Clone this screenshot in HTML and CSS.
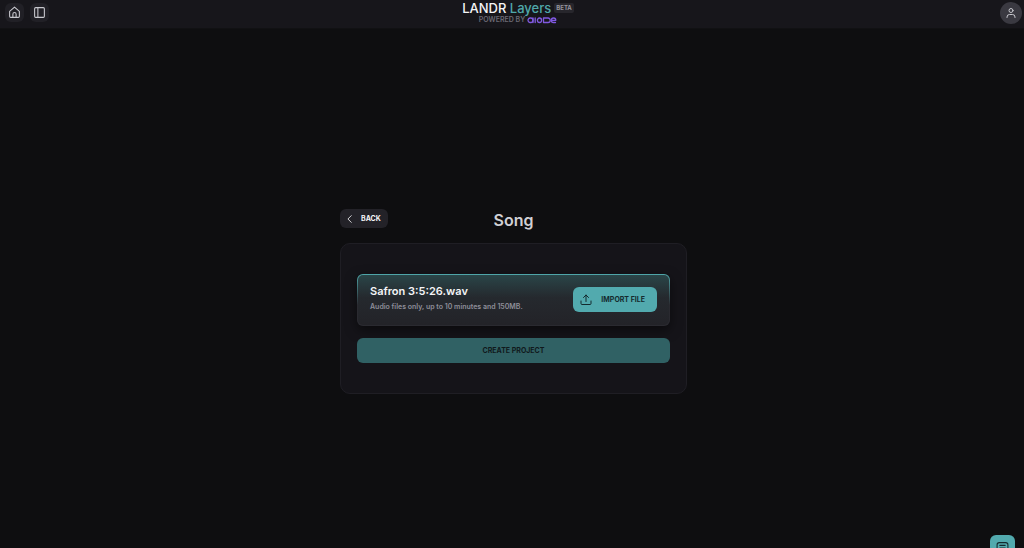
FILE: index.html
```html
<!DOCTYPE html>
<html lang="en">
    <head>
        <meta charset="utf-8">
        <meta name="viewport" content="width=device-width, initial-scale=1">
        <title>LANDR Layers</title>
        <link rel="stylesheet" href="styles.css">
    </head>
    <body>
        <header class="topbar">
            <nav class="topbar-nav">
                <a class="icon-btn" href="#" aria-label="Home">
                    <svg viewBox="0 0 24 24"><path d="M3 10 12 2l9 8v9a2 2 0 0 1-2 2H5a2 2 0 0 1-2-2z"/><path d="M9 21v-6a3 3 0 0 1 6 0v6"/></svg>
                </a>
                <button class="icon-btn" type="button" aria-label="Toggle sidebar">
                    <svg viewBox="0 0 24 24"><rect x="3" y="3" width="18" height="18" rx="2"/><path d="M9 3v18"/></svg>
                </button>
            </nav>
            <div class="brand">
                <div class="brand-name">LANDR <span class="brand-accent">Layers</span><span class="badge">BETA</span></div>
                <div class="powered">POWERED BY
                    <svg class="aiode" viewBox="0 0 30 7" role="img" aria-label="aiode">
                        <rect x="1" y="1" width="5" height="4.5" rx="2.2"/>
                        <path d="M6 1v4.5M8.2 1v4.5"/>
                        <rect x="10.4" y="1" width="4.2" height="4.5" rx="2.2"/>
                        <path d="M16.5 1h4.5a2.25 2.25 0 0 1 0 4.5h-4.5z"/>
                        <path d="M28.5 5.5h-2a2.25 2.25 0 1 1 2.300-2.200h-4"/>
                    </svg>
                </div>
            </div>
            <button class="avatar" type="button" aria-label="Account">
                <svg viewBox="0 0 24 24"><circle cx="12" cy="7" r="4"/><path d="M4 21v-1a5 5 0 0 1 5-5h6a5 5 0 0 1 5 5v1"/></svg>
            </button>
        </header>

        <main class="page">
            <section class="upload">
                <div class="upload-head">
                    <button class="back" type="button">
                        <svg viewBox="0 0 24 24"><path d="m15 4-8 8 8 8"/></svg>
                        BACK
                    </button>
                    <h1>Song</h1>
                </div>
                <div class="card">
                    <div class="file">
                        <div class="file-info">
                            <h2>Safron 3:5:26.wav</h2>
                            <p>Audio files only, up to 10 minutes and 150MB.</p>
                        </div>
                        <button class="import" type="button">
                            <svg viewBox="0 0 24 24"><path d="M12 16V3M7 8l5-5 5 5M2 15v5a2 2 0 0 0 2 2h16a2 2 0 0 0 2-2v-5"/></svg>
                            IMPORT FILE
                        </button>
                    </div>
                    <button class="create" type="button" disabled>CREATE PROJECT</button>
                </div>
            </section>
        </main>

        <button class="chat" type="button" aria-label="Open chat">
            <svg viewBox="0 0 24 24"><rect x="2" y="3" width="20" height="16" rx="4"/><path d="M7 8h10M7 13h10"/></svg>
        </button>
    </body>
</html>
```

FILE: styles.css
```css
* {
    box-sizing: border-box;
}

body {
    margin: 0;
    min-height: 100vh;
    display: flex;
    flex-direction: column;
    background-color: #0e0e10;
    color: #f4f4f6;
    font-family: Inter, "Liberation Sans", sans-serif;
}

h1, h2, p {
    margin: 0;
}

button {
    border: 0;
    padding: 0;
    font: 700 7px/13px Inter, "Liberation Sans", sans-serif;
    color: inherit;
}

svg {
    display: block;
    fill: none;
    stroke: currentColor;
    stroke-width: 2;
    stroke-linecap: round;
    stroke-linejoin: round;
}

/* top bar */
.topbar {
    display: grid;
    grid-template-columns: 1fr auto 1fr;
    align-items: start;
    height: 29px;
    padding: 0 2px 0 5px;
    background-color: #17161b;
    border-bottom: 1px solid #111113;
}

.topbar-nav {
    display: flex;
    gap: 6px;
    padding-top: 3px;
}

.icon-btn {
    display: grid;
    place-items: center;
    width: 19px;
    height: 19px;
    border-radius: 6px;
    background-color: #212026;
    color: #c8c8ce;
}

.icon-btn svg {
    width: 13px;
    height: 13px;
}

.brand {
    display: flex;
    flex-direction: column;
    align-items: center;
    padding-left: 9px;
}

.brand-name {
    display: flex;
    align-items: center;
    font-size: 13px;
    font-weight: 500;
    line-height: 16px;
    white-space: pre;
}

.brand-accent {
    color: #4fa7aa;
}

.badge {
    margin-left: 3px;
    padding: 0 2px;
    border-radius: 2px;
    background-color: #27262c;
    color: #96959e;
    font-size: 6px;
    font-weight: 700;
    line-height: 10px;
}

.powered {
    display: flex;
    align-items: center;
    gap: 2px;
    color: #6a6974;
    font-size: 7px;
    font-weight: 600;
    line-height: 8px;
}

.aiode {
    width: 30px;
    height: 7px;
    color: #8059e0;
    stroke-width: 1.3;
}

.avatar {
    justify-self: end;
    display: grid;
    place-items: center;
    width: 22px;
    height: 22px;
    margin-top: 2px;
    border-radius: 50%;
    background-color: #3a3941;
    color: #c8c8ce;
}

.avatar svg {
    width: 12px;
    height: 12px;
}

/* upload form */
.page {
    flex: 1;
    display: flex;
    justify-content: center;
    align-items: center;
    padding: 26px 0 0 3px;
}

.upload {
    width: 347px;
    max-width: 100%;
}

.upload-head {
    display: grid;
    grid-template-columns: 1fr auto 1fr;
    align-items: start;
    margin-bottom: 12px;
}

.upload-head h1 {
    color: #d0d0d4;
    font-size: 16px;
    font-weight: 600;
    line-height: 22px;
}

.back {
    justify-self: start;
    display: flex;
    align-items: center;
    gap: 6px;
    padding: 3px 7px 3px 5px;
    border-radius: 6px;
    background-color: #232228;
}

.back svg {
    width: 10px;
    height: 10px;
}

.card {
    padding: 30px 16px;
    border: 1px solid #1f1e24;
    border-radius: 10px;
    background-color: #151419;
}

.file {
    display: flex;
    justify-content: space-between;
    align-items: center;
    padding: 12px 12px 13px;
    border: 1px solid transparent;
    border-radius: 6px;
    background:
        linear-gradient(#2a4548, #25292e 45%, #232328) padding-box,
        linear-gradient(#4fa7aa, #2a2a30 60%) border-box;
    box-shadow: 0 4px 12px rgba(0, 0, 0, 0.5);
}

.file-info {
    align-self: flex-start;
}

.file h2 {
    font-size: 11px;
    font-weight: 600;
    line-height: 9px;
}

.file p {
    margin-top: 6px;
    color: #8e8e99;
    font-size: 7px;
    font-weight: 600;
    line-height: 10px;
}

.import {
    display: flex;
    align-items: center;
    gap: 9px;
    padding: 6px 12px 6px 7px;
    border-radius: 6px;
    background-color: #52aaae;
    color: #142a2e;
}

.import svg {
    width: 12px;
    height: 13px;
}

.create {
    display: block;
    width: 100%;
    margin-top: 12px;
    padding: 6px;
    border-radius: 6px;
    background-color: #306164;
    color: #10191c;
}

/* chat launcher, cut by the bottom of the window */
.chat {
    position: fixed;
    right: 9px;
    bottom: -12px;
    display: grid;
    place-items: center;
    width: 25px;
    height: 25px;
    border-radius: 6px;
    background-color: #52aaae;
    color: #142a2e;
}

.chat svg {
    width: 13px;
    height: 13px;
}
```
